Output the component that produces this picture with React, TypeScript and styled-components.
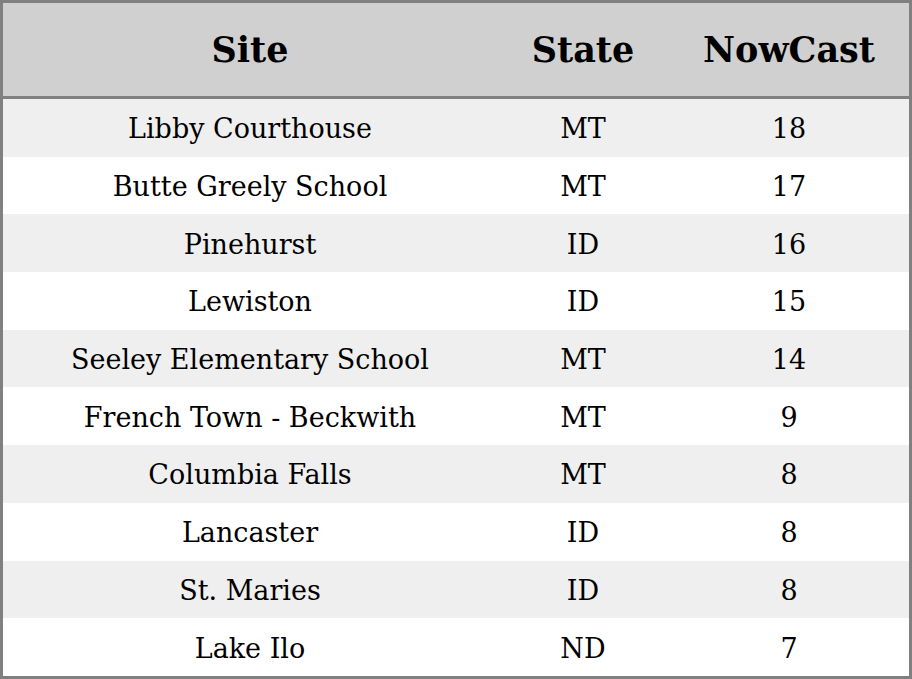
import styled, { createGlobalStyle } from "styled-components"

const GlobalStyle = createGlobalStyle`
    html, body {
        margin: 0;
        padding: 0;
        background: #ffffff;
    }
    body {
        font-family: "DejaVu Serif", "Liberation Serif", serif;
        color: #000000;
    }
`

const colors = {
    border: "#808080",
    header: "#d0d0d0",
    stripe: "#efefef",
    plain: "#ffffff",
}

const rows = [
    { site: "Libby Courthouse", state: "MT", nowcast: 18 },
    { site: "Butte Greely School", state: "MT", nowcast: 17 },
    { site: "Pinehurst", state: "ID", nowcast: 16 },
    { site: "Lewiston", state: "ID", nowcast: 15 },
    { site: "Seeley Elementary School", state: "MT", nowcast: 14 },
    { site: "French Town - Beckwith", state: "MT", nowcast: 9 },
    { site: "Columbia Falls", state: "MT", nowcast: 8 },
    { site: "Lancaster", state: "ID", nowcast: 8 },
    { site: "St. Maries", state: "ID", nowcast: 8 },
    { site: "Lake Ilo", state: "ND", nowcast: 7 },
]

const StyledTable = styled.table`
    width: 912px;
    height: 679px;
    border-collapse: separate;
    border-spacing: 0;
    table-layout: fixed;
    border: 3px solid ${colors.border};
    box-sizing: border-box;
`

const StyledHeadRow = styled.tr`
    height: 96px;
    background: ${colors.header};
`

const StyledHeadCell = styled.th`
    font-size: 35px;
    font-weight: bold;
    text-align: center;
    padding: 0;
    border-bottom: 3px solid ${colors.border};
`

interface RowProps {
    $striped: boolean;
}

const StyledRow = styled.tr<RowProps>`
    background: ${props => props.$striped ? colors.stripe : colors.plain};
`

const StyledCell = styled.td`
    font-size: 27px;
    text-align: center;
    padding: 2px 0 0;
`

export default function App() {
    return (
        <>
            <GlobalStyle />
            <StyledTable>
                <colgroup>
                    <col style={{ width: 494 }} />
                    <col style={{ width: 172 }} />
                    <col style={{ width: 240 }} />
                </colgroup>
                <thead>
                    <StyledHeadRow>
                        <StyledHeadCell>Site</StyledHeadCell>
                        <StyledHeadCell>State</StyledHeadCell>
                        <StyledHeadCell>NowCast</StyledHeadCell>
                    </StyledHeadRow>
                </thead>
                <tbody>
                    {rows.map((row, i) => (
                        <StyledRow key={row.site} $striped={i % 2 === 0}>
                            <StyledCell>{row.site}</StyledCell>
                            <StyledCell>{row.state}</StyledCell>
                            <StyledCell>{row.nowcast}</StyledCell>
                        </StyledRow>
                    ))}
                </tbody>
            </StyledTable>
        </>
    )
}
